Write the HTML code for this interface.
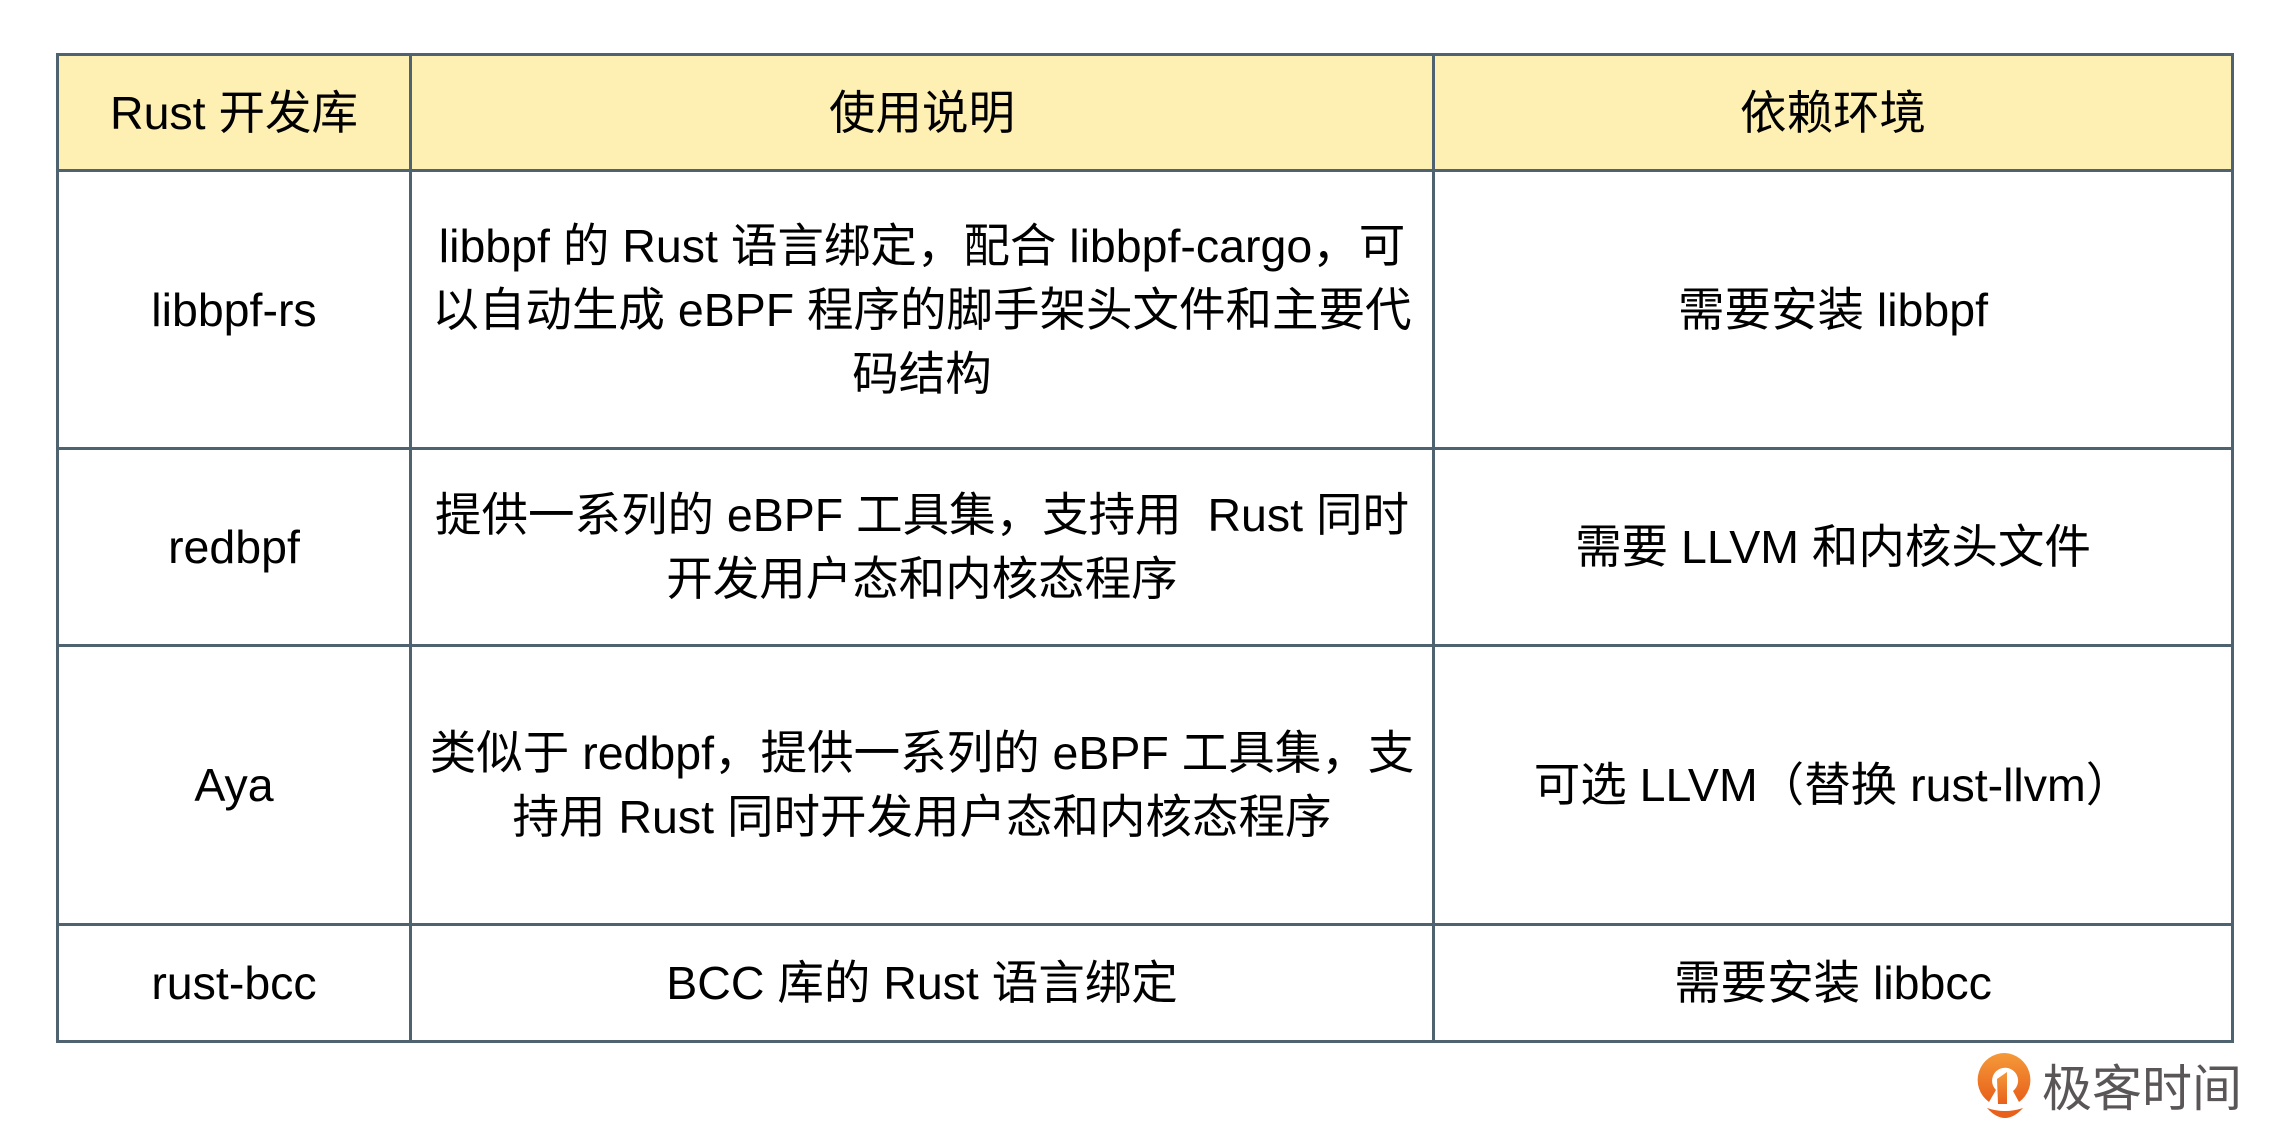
<!DOCTYPE html>
<html><head><meta charset="utf-8"><style>
html,body{margin:0;padding:0;background:#fff;}
body{width:2284px;height:1126px;position:relative;overflow:hidden;font-family:"Liberation Sans","Noto Sans CJK SC",sans-serif;color:#000;}
table{position:absolute;left:56px;top:53px;width:2166px;border-collapse:collapse;table-layout:fixed;}
td{border:3px solid #4f6270;text-align:center;vertical-align:middle;font-size:46.5px;line-height:64px;padding:0;white-space:nowrap;overflow:visible;}
tr.h td{background:#fef0b3;}
.logo{position:absolute;left:1977px;top:1052px;}
.lt{position:absolute;left:2042px;top:1052px;font-size:50px;line-height:66px;color:#5a5657;font-family:"Noto Sans CJK SC",sans-serif;}
</style></head><body>
<table>
<tr class="h" style="height:116px"><td style="width:350px">Rust 开发库</td><td style="width:1020px">使用说明</td><td style="width:796px">依赖环境</td></tr>
<tr style="height:278px"><td>libbpf-rs</td><td>libbpf 的 Rust 语言绑定，配合 libbpf-cargo，可<br>以自动生成 eBPF 程序的脚手架头文件和主要代<br>码结构</td><td>需要安装 libbpf</td></tr>
<tr style="height:197px"><td>redbpf</td><td>提供一系列的 eBPF 工具集，支持用&nbsp; Rust 同时<br>开发用户态和内核态程序</td><td>需要 LLVM 和内核头文件</td></tr>
<tr style="height:279px"><td>Aya</td><td>类似于 redbpf，提供一系列的 eBPF 工具集，支<br>持用 Rust 同时开发用户态和内核态程序</td><td>可选 LLVM（替换 rust-llvm）</td></tr>
<tr style="height:117px"><td>rust-bcc</td><td>BCC 库的 Rust 语言绑定</td><td>需要安装 libbcc</td></tr>
</table>
<svg class="logo" width="56" height="66" viewBox="0 0 56 66">
<defs><linearGradient id="g" x1="0" y1="0" x2="0" y2="1"><stop offset="0" stop-color="#f59a3a"/><stop offset="1" stop-color="#e8601a"/></linearGradient></defs>
<path d="M28 1 A27 27 0 0 0 12 50 L19 38 A13 13 0 1 1 36 39 L42 50 A27 27 0 0 0 28 1 Z" fill="url(#g)"/>
<path d="M20 27 L30 20 L30 52 L21 52 Z" fill="url(#g)"/>
<path d="M10 56 Q28 62 46 56 Q37 66 28 66 Q19 66 10 56 Z" fill="#e8601a"/>
</svg>
<div class="lt">极客时间</div>
</body></html>
